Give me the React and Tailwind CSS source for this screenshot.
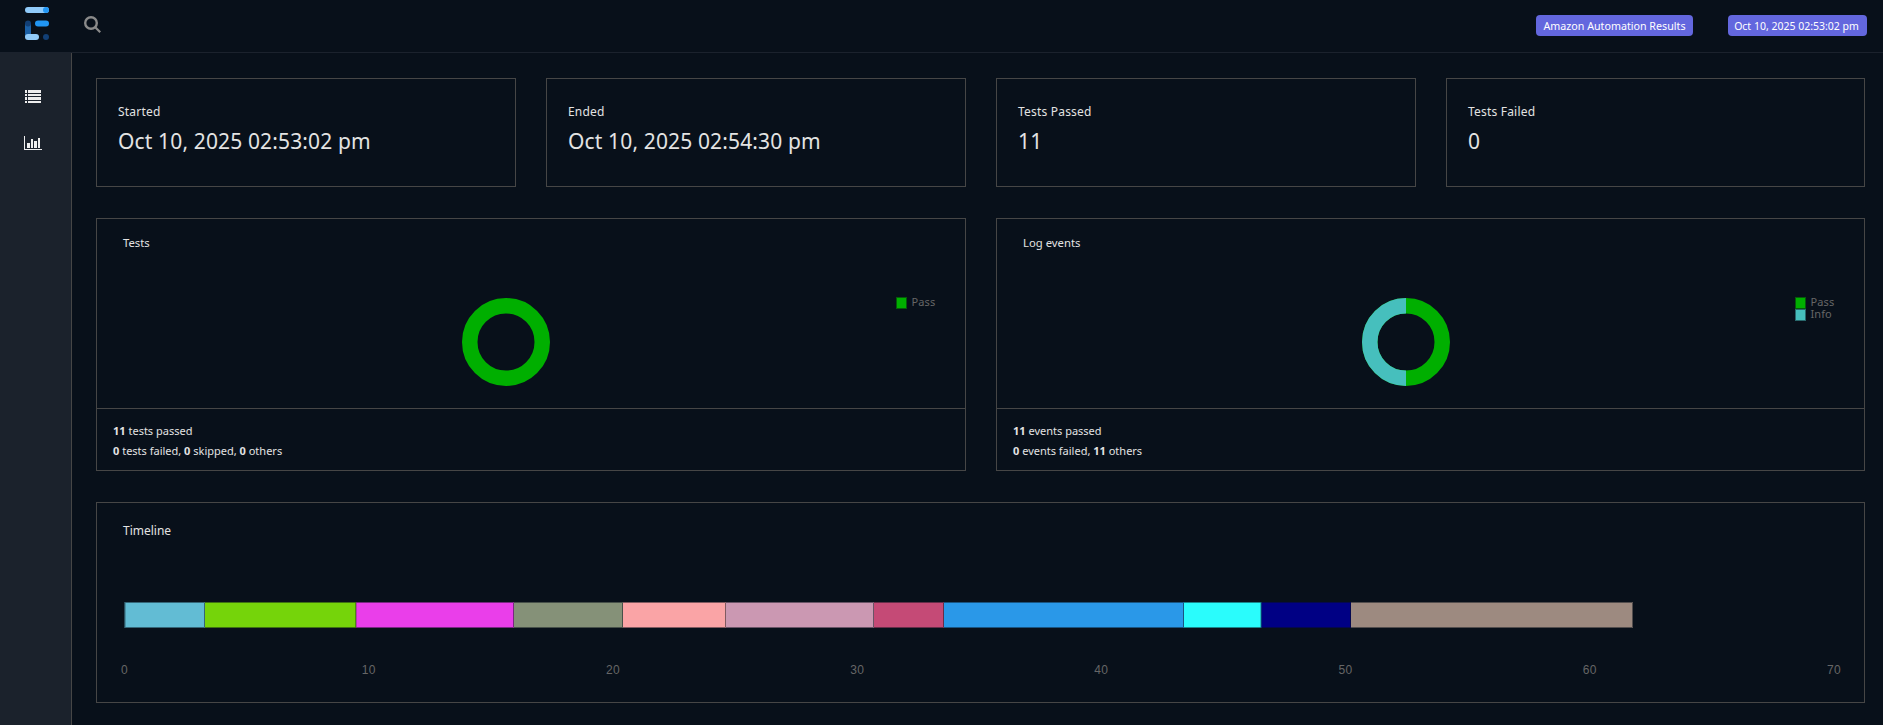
const cards = [
  { label: "Started", value: "Oct 10, 2025 02:53:02 pm" },
  { label: "Ended", value: "Oct 10, 2025 02:54:30 pm" },
  { label: "Tests Passed", value: "11" },
  { label: "Tests Failed", value: "0" },
];

const segments = [
  { x: 124.5, color: "#62bcd4" },
  { x: 205, color: "#75d40a" },
  { x: 356.3, color: "#ea3eea" },
  { x: 514, color: "#859178" },
  { x: 623, color: "#faa4a6" },
  { x: 726, color: "#cb98b2" },
  { x: 874, color: "#c54a76" },
  { x: 944, color: "#2a98e8" },
  { x: 1184, color: "#2afcfc" },
  { x: 1261.5, color: "#000084" },
  { x: 1351, color: "#9d8a80" },
];
const timelineEnd = 1633;

function Logo() {
  return (
    <svg className="block h-[33px] w-6" viewBox="0 0 24 33">
      <rect x="0" y="0" width="24" height="6" rx="3" fill="#90caf9" />
      <circle cx="21" cy="3" r="3" fill="#2196f3" />
      <path d="M0 16.5h6V30H0z" fill="#1a5fa5" />
      <circle cx="3" cy="16.5" r="3" fill="#123f75" />
      <rect x="10" y="13.5" width="14" height="6" rx="3" fill="#2196f3" />
      <rect x="0" y="27" width="14" height="6" rx="3" fill="#90caf9" />
      <circle cx="21" cy="30" r="3" fill="#123f75" />
    </svg>
  );
}

function Donut({ split }) {
  return (
    <svg className="block h-[88px] w-[88px]" viewBox="-44 -44 88 88">
      <circle r="36.25" fill="none" stroke="#00af00" strokeWidth="15.5" />
      {split && (
        <path d="M0 36.25A36.25 36.25 0 0 1 0 -36.25" fill="none" stroke="#46bfbd" strokeWidth="15.5" />
      )}
    </svg>
  );
}

function Legend({ items }) {
  return (
    <div className="mt-[78px] flex w-[69.5px] flex-col">
      {items.map((item) => (
        <div key={item} className="flex h-3 items-center gap-[5px]">
          <span
            className={
              item === "Pass"
                ? "h-3 w-[11px] shrink-0 border border-[#055a09] bg-[#00af00]"
                : "h-3 w-[11px] shrink-0 border border-[#28686c] bg-[#46bfbd]"
            }
          />
          <span className="relative -top-px text-[11px] leading-3 tracking-[0.1px] text-[#666]">{item}</span>
        </div>
      ))}
    </div>
  );
}

function ChartPanel({ title, split, items, children }) {
  return (
    <section className="flex h-[253px] min-w-0 flex-col border border-[#464646]">
      <div className="flex h-[189px] justify-between">
        <div className="w-[365px] pl-[26px] pt-[15px] text-[11.3px] leading-[18px]">{title}</div>
        <div className="mr-auto pt-[79px]">
          <Donut split={split} />
        </div>
        <Legend items={items} />
      </div>
      <div className="flex-1 border-t border-[#464646] pl-4 pt-3 text-[11px] leading-5">{children}</div>
    </section>
  );
}

export default function App() {
  return (
    <div className="flex h-[725px] w-[1883px] flex-col overflow-hidden bg-[#08101a] font-['Noto_Sans',sans-serif] text-[#e3e3e3]">
      <header className="flex h-[53px] shrink-0 items-start border-b border-[#1b222d]">
        <div className="pl-[25px] pt-[7px]">
          <Logo />
        </div>
        <svg className="ml-[35px] mt-4 block h-[17px] w-[17px]" viewBox="0 0 17 17">
          <circle cx="7" cy="7" r="5.8" fill="none" stroke="#8a8a8a" strokeWidth="2.4" />
          <path d="M11.2 11.2L16.2 16.2" stroke="#8a8a8a" strokeWidth="2.2" />
        </svg>
        <div className="ml-auto mr-4 mt-[15px] flex gap-[35px] leading-[22px] text-white">
          <span className="h-[21px] w-[157px] whitespace-nowrap rounded bg-[#6367de] text-center text-[10.7px]">Amazon Automation Results</span>
          <span className="h-[21px] w-[139px] whitespace-nowrap rounded bg-[#6367de] pr-0.5 text-center text-[10.5px]">Oct 10, 2025 02:53:02 pm</span>
        </div>
      </header>
      <div className="flex flex-1">
        <nav className="flex w-[72px] shrink-0 flex-col border-r border-[#464646] bg-[#1b222c] pl-6 pt-[37px]">
          <svg className="ml-px block h-[13px] w-4" viewBox="0 0 16 13" fill="#eee" shapeRendering="crispEdges">
            <path d="M0 0h2v3H0zM3 0h13v3H3zM0 4h2v2H0zM3 4h13v2H3zM0 7h2v3H0zM3 7h13v3H3zM0 11h2v2H0zM3 11h13v2H3z" />
          </svg>
          <svg className="mt-[33px] block h-[14px] w-[18px]" viewBox="0 0 18 14" fill="#eee" shapeRendering="crispEdges">
            <path d="M0 0h1v13h17v1H0zM3 7h3v5H3zM7 3h2v9H7zM10 5h3v7h-3zM14 2h2v10h-2z" />
          </svg>
        </nav>
        <main className="flex min-w-0 flex-1 flex-col pl-6 pr-[18px] pt-[25px]">
          <div className="grid h-[109px] grid-cols-[420px_420px_420px_1fr] gap-[30px]">
            {cards.map((card) => (
              <section key={card.label} className="min-w-0 border border-[#464646] pl-[21px] pt-[23px]">
                <div className="text-[12px] leading-5 tracking-[0.2px]">{card.label}</div>
                <div className="whitespace-nowrap pt-[3px] text-[21px] leading-8 tracking-[0.14px]">{card.value}</div>
              </section>
            ))}
          </div>
          <div className="mt-[31px] grid grid-cols-[870px_1fr] gap-[30px]">
            <ChartPanel title="Tests" items={["Pass"]}>
              <div><b>11</b> tests passed</div>
              <div><b>0</b> tests failed, <b>0</b> skipped, <b>0</b> others</div>
            </ChartPanel>
            <ChartPanel title="Log events" split items={["Pass", "Info"]}>
              <div><b>11</b> events passed</div>
              <div><b>0</b> events failed, <b>11</b> others</div>
            </ChartPanel>
          </div>
          <section className="mt-[31px] flex h-[201px] flex-col border border-[#464646]">
            <div className="pl-[26px] pt-[18px] text-[12px] leading-5">Timeline</div>
            <svg className="mt-[61px] block h-[26px] w-[1767px] shrink-0" viewBox="97 0 1767 26">
              {segments.map((s, i) => {
                const end = i + 1 < segments.length ? segments[i + 1].x : timelineEnd;
                return (
                  <g key={s.x}>
                    <rect x={s.x} y="0" width={end - s.x} height="26" fill={s.color} />
                    <path
                      d={`M${s.x} 0.5H${end - 0.5}V25.5H${s.x}`}
                      fill="none"
                      stroke="#08101a"
                      strokeOpacity="0.5"
                    />
                  </g>
                );
              })}
              <path d="M125 1V25" stroke="#08101a" strokeOpacity="0.5" />
            </svg>
            <div className="ml-[-94.5px] mt-[34px] flex text-[12px] leading-4 tracking-[0.3px] text-[#666]">
              {[0, 10, 20, 30, 40, 50, 60, 70].map((n) => (
                <span key={n} className="w-[244.2px] shrink-0 text-center font-['Liberation_Sans',sans-serif]">{n}</span>
              ))}
            </div>
          </section>
        </main>
      </div>
    </div>
  );
}
